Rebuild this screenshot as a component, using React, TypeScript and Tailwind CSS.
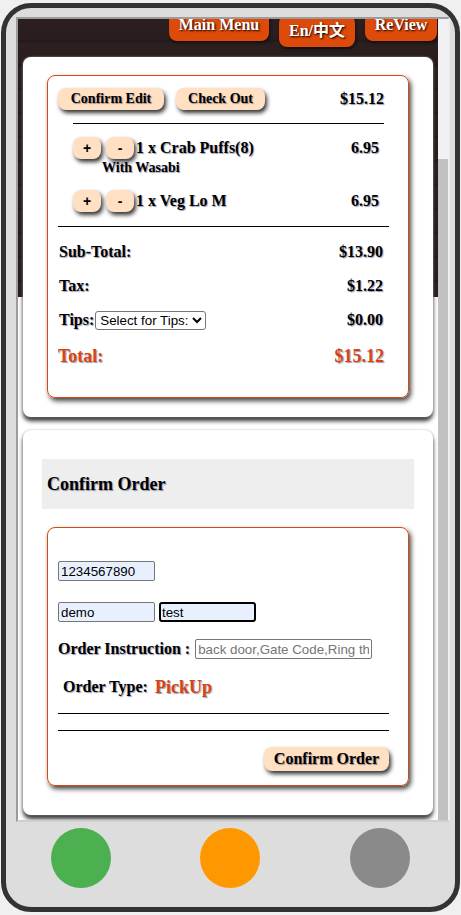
import React from "react";

const serif = "font-['Liberation_Serif',serif] font-bold leading-[1.15] [text-shadow:1px_1px_1px_rgba(20,40,90,0.45)]";
const sans = "font-['Liberation_Sans',Arial,sans-serif]";
const peachBtn =
  "bg-[#ffe0c2] rounded-[8px] shadow-[2px_3px_4px_#333] flex items-center justify-center text-black";
const field = `h-[20px] px-[2px] border border-[#767676] rounded-[2px] text-[13.33px] text-black ${sans} outline-none`;

function TopButton({ label, lift }: { label: string; lift: string }) {
  return (
    <div
      className={`${lift} h-[32px] bg-[#dd4a0a] rounded-[8px] flex items-center justify-center whitespace-nowrap text-white text-[16px] font-bold leading-none font-['Liberation_Serif','Noto_Sans_CJK_SC',serif] [text-shadow:1px_1px_2px_#000] shadow-[1px_2px_3px_#111]`}
    >
      {label}
    </div>
  );
}

function QtyButtons() {
  return (
    <div className="flex gap-[5px] shrink-0">
      <div className={`${peachBtn} w-[28px] h-[22px] ${sans} text-[14px] font-bold leading-none`}>+</div>
      <div className={`${peachBtn} w-[28px] h-[22px] ${sans} text-[14px] font-bold leading-none`}>-</div>
    </div>
  );
}

function SummaryRow({ label, value, children }: { label: string; value: string; children?: React.ReactNode }) {
  return (
    <div className={`h-[34px] flex items-center justify-between pl-[11px] pr-[25px] text-[16px] ${serif}`}>
      <div className="flex items-center">
        <span>{label}</span>
        {children}
      </div>
      <span>{value}</span>
    </div>
  );
}

export default function App() {
  return (
    <div className="w-[461px] h-[915px] bg-[#f0f0f0] pt-[3px] pl-[1px] overflow-hidden leading-[1.15]">
      <div className="w-[459px] h-[909px] border-[5px] border-[#333] rounded-[30px] bg-[#dddddd] flex flex-col overflow-hidden">
        {/* screen */}
        <div className="mt-[9px] ml-[10px] w-[434px] h-[805px] border-2 border-t-[#9c9c9c] border-l-[#9c9c9c] border-r-[#eeeeee] border-b-[#cfcfcf] flex overflow-hidden shrink-0">
          <div className="w-[420px] h-full overflow-hidden bg-white bg-no-repeat bg-[length:100%_278px] bg-[image:repeating-linear-gradient(180deg,#2c1f1f_0px,#2a1d1d_20px,#231717_22px,#2c1f1f_24px)]">
            {/* header nav */}
            <div className="h-[38px] flex items-start justify-end gap-[10px] pr-[1px]">
              <TopButton label="Main Menu" lift="-mt-[10px] w-[100px]" />
              <TopButton label="En/中文" lift="-mt-[4px] w-[76px]" />
              <TopButton label="ReView" lift="-mt-[10px] w-[72px]" />
            </div>

            {/* cart card */}
            <div className="mx-[5px] bg-white rounded-[8px] shadow-[0_0_2px_#aaa,0_4px_4px_#333] pt-[18px] pb-[19px] px-[24px]">
              <div className="border border-[#d9480f] rounded-[8px] shadow-[2px_3px_5px_#444] pt-[12px] pb-[22px]">
                <div className="h-[22px] flex items-center pl-[10px] pr-[24px]">
                  <div className={`${peachBtn} w-[106px] h-[22px] text-[14px] ${serif}`}>Confirm Edit</div>
                  <div className={`${peachBtn} ml-[12px] w-[89px] h-[22px] text-[14px] ${serif}`}>Check Out</div>
                  <span className={`ml-auto text-[16px] ${serif}`}>$15.12</span>
                </div>
                <div className="mt-[13px] ml-[25px] mr-[24px] h-px bg-black" />

                <div className="mt-[13px] h-[22px] flex items-center pl-[25px] pr-[29px]">
                  <QtyButtons />
                  <span className={`ml-[2px] text-[16px] ${serif}`}>1 x Crab Puffs(8)</span>
                  <span className={`ml-auto text-[16px] ${serif}`}>6.95</span>
                </div>
                <div className={`mt-[2px] pl-[54px] h-[14px] leading-[14px] text-[14px] ${serif}`}>With Wasabi</div>

                <div className="mt-[15px] h-[22px] flex items-center pl-[25px] pr-[29px]">
                  <QtyButtons />
                  <span className={`ml-[2px] text-[16px] ${serif}`}>1 x Veg Lo M</span>
                  <span className={`ml-auto text-[16px] ${serif}`}>6.95</span>
                </div>
                <div className="mt-[14px] ml-[10px] mr-[19px] h-px bg-black" />

                <div className="mt-[8px]">
                  <SummaryRow label="Sub-Total:" value="$13.90" />
                  <SummaryRow label="Tax:" value="$1.22" />
                  <SummaryRow label="Tips:" value="$0.00">
                    <select
                      defaultValue=""
                      className={`ml-px h-[19px] border border-[#767676] rounded-[3px] bg-white text-black text-[13.33px] font-normal ${sans} [text-shadow:none]`}
                    >
                      <option value="">Select for Tips:</option>
                    </select>
                  </SummaryRow>
                  <div className={`h-[38px] flex items-center justify-between pl-[10px] pr-[24px] text-[18px] text-[#d64510] ${serif}`}>
                    <span>Total:</span>
                    <span>$15.12</span>
                  </div>
                </div>
              </div>
            </div>

            {/* confirm order card */}
            <div className="mt-[13px] mx-[5px] bg-white rounded-[8px] shadow-[0_0_2px_#aaa,0_4px_4px_#333] pt-[29px] pb-[29px]">
              <div className="mx-[19px] h-[50px] bg-[#eeeeee] flex items-center pl-[5px]">
                <h2 className={`text-[18px] ${serif}`}>Confirm Order</h2>
              </div>
              <div className="mt-[18px] mx-[24px] border border-[#d9480f] rounded-[8px] shadow-[2px_3px_5px_#444] pt-[33px] pb-[14px]">
                <div className="pl-[10px] flex">
                  <input readOnly value="1234567890" className={`w-[97px] bg-[#e8f0fe] ${field}`} />
                </div>
                <div className="mt-[21px] pl-[10px] flex gap-[4px]">
                  <input readOnly value="demo" className={`w-[97px] bg-[#e8f0fe] ${field}`} />
                  <input
                    readOnly
                    value="test"
                    className={`w-[97px] h-[20px] px-px bg-[#e8f0fe] border-2 border-black rounded-[3px] text-[13.33px] text-black ${sans} outline-none`}
                  />
                </div>
                <div className="mt-[17px] h-[20px] pl-[10px] flex items-center">
                  <span className={`text-[16px] ${serif}`}>Order Instruction :</span>
                  <input
                    placeholder="back door,Gate Code,Ring the bell"
                    className={`ml-[5px] w-[177px] bg-white ${field} placeholder:text-[#757575]`}
                  />
                </div>
                <div className="mt-[16px] h-[24px] pl-[15px] flex items-center">
                  <span className={`text-[16px] ${serif}`}>Order Type:</span>
                  <span className={`ml-[7px] text-[18px] text-[#d64510] ${serif}`}>PickUp</span>
                </div>
                <div className="mt-[14px] ml-[10px] mr-[19px] h-px bg-black" />
                <div className="mt-[16px] ml-[10px] mr-[19px] h-px bg-black" />
                <div className="mt-[16px] pr-[19px] flex justify-end">
                  <div className={`${peachBtn} w-[125px] h-[24px] text-[16px] ${serif}`}>Confirm Order</div>
                </div>
              </div>
            </div>
          </div>

          {/* scrollbar */}
          <div className="w-[10px] h-full flex flex-col bg-[#f1f1f4]">
            <div className="h-[140px] shrink-0" />
            <div className="flex-1 bg-[#c1c1c1]" />
          </div>
        </div>

        {/* bottom controls */}
        <div className="mt-[6px] flex justify-around">
          <div className="w-[60px] h-[60px] rounded-full bg-[#4caf50]" />
          <div className="w-[60px] h-[60px] rounded-full bg-[#ff9800]" />
          <div className="w-[60px] h-[60px] rounded-full bg-[#8a8a8a]" />
        </div>
      </div>
    </div>
  );
}
